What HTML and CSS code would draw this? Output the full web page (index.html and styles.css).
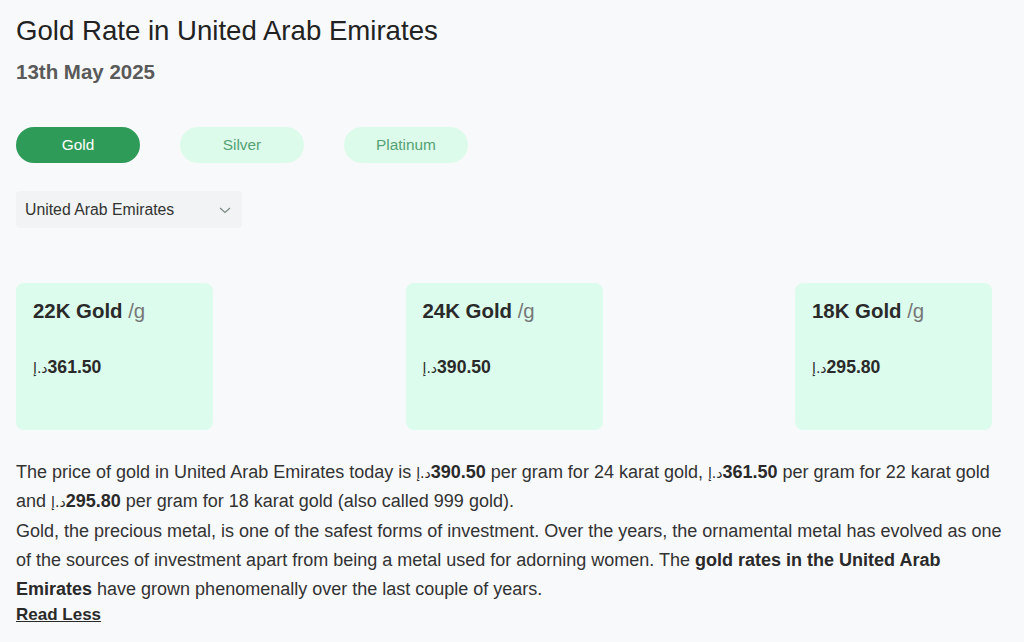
FILE: index.html
```html
<!DOCTYPE html>
<html>
<head>
    <title>Gold Rate in United Arab Emirates</title>
    <link rel="stylesheet" href="styles.css">
</head>
<body>
    <div class="page">
        <h1 class="title">Gold Rate in United Arab Emirates</h1>
        <div class="date">13th May 2025</div>

        <div class="tabs">
            <button class="tab active">Gold</button>
            <button class="tab">Silver</button>
            <button class="tab">Platinum</button>
        </div>

        <div class="select">
            <span>United Arab Emirates</span>
            <svg width="14" height="14" viewBox="0 0 14 14"><path d="M2 5l5 4.5L12 5" fill="none" stroke="#7a8a80" stroke-width="1.2"/></svg>
        </div>

        <div class="cards">
            <div class="card">
                <div class="card-title"><b>22K Gold</b> <span>/g</span></div>
                <div class="price"><span class="cur">د.إ</span>361.50</div>
            </div>
            <div class="card">
                <div class="card-title"><b>24K Gold</b> <span>/g</span></div>
                <div class="price"><span class="cur">د.إ</span>390.50</div>
            </div>
            <div class="card">
                <div class="card-title"><b>18K Gold</b> <span>/g</span></div>
                <div class="price"><span class="cur">د.إ</span>295.80</div>
            </div>
        </div>

        <div class="about">
            <p>The price of gold in United Arab Emirates today is <b><span class="cur">د.إ</span>390.50</b> per gram for 24 karat gold, <b><span class="cur">د.إ</span>361.50</b> per gram for 22 karat gold and <b><span class="cur">د.إ</span>295.80</b> per gram for 18 karat gold (also called 999 gold).</p>
            <p>Gold, the precious metal, is one of the safest forms of investment. Over the years, the ornamental metal has evolved as one of the sources of investment apart from being a metal used for adorning women. The <b>gold rates in the United Arab Emirates</b> have grown phenomenally over the last couple of years.</p>
            <a class="toggle" href="#">Read Less</a>
        </div>
    </div>
</body>
</html>
```

FILE: styles.css
```css
body {
    margin: 0;
    background: #f8f9fb;
    font-family: "Liberation Sans", Arial, sans-serif;
    color: #222;
}
.page {
    padding: 15px 16px 0 16px;
}
.title {
    margin: 0;
    font-size: 27.6px;
    font-weight: normal;
    line-height: 32px;
    color: #222;
}
.date {
    margin-top: 13px;
    font-size: 20.5px;
    font-weight: bold;
    color: #5a5a5a;
    line-height: 24px;
}
.tabs {
    display: flex;
    gap: 40px;
    margin-top: 43px;
}
.tab {
    width: 124px;
    height: 36px;
    border: none;
    border-radius: 18px;
    background: #ddfbea;
    color: #55a274;
    font-family: "Liberation Sans", Arial, sans-serif;
    font-size: 15.4px;
    padding: 0;
}
.tab.active {
    background: #2f9b58;
    color: #fff;
}
.select {
    display: flex;
    align-items: center;
    justify-content: space-between;
    width: 226px;
    height: 37px;
    box-sizing: border-box;
    margin-top: 28px;
    padding: 0 10px 0 9px;
    background: #f1f3f4;
    border-radius: 4px;
    font-size: 15.8px;
    color: #333;
}
.cards {
    display: flex;
    justify-content: space-between;
    margin-top: 55px;
    margin-right: 16px;
}
.card {
    width: 197px;
    height: 147px;
    box-sizing: border-box;
    padding: 16px 17px;
    background: #dcfced;
    border-radius: 8px;
}
.card-title {
    font-size: 20.4px;
    line-height: 24px;
}
.card-title b {
    color: #2a2a2a;
}
.card-title span {
    color: #777;
}
.price {
    margin-top: 34px;
    font-size: 17.6px;
    line-height: 20px;
    font-weight: bold;
    color: #2a2a2a;
}
.cur {
    unicode-bidi: isolate;
    font-family: "DejaVu Sans", sans-serif;
    font-weight: normal;
    font-size: 14px;
    line-height: 1;
}
.about {
    margin-top: 28px;
    font-size: 18px;
    color: #333;
}
.about p {
    margin: 0;
    line-height: 29.3px;
}
.about b {
    color: #2a2a2a;
}
.toggle {
    display: inline-block;
    font-size: 17px;
    font-weight: bold;
    color: #2a2a2a;
    line-height: 20px;
}
```
